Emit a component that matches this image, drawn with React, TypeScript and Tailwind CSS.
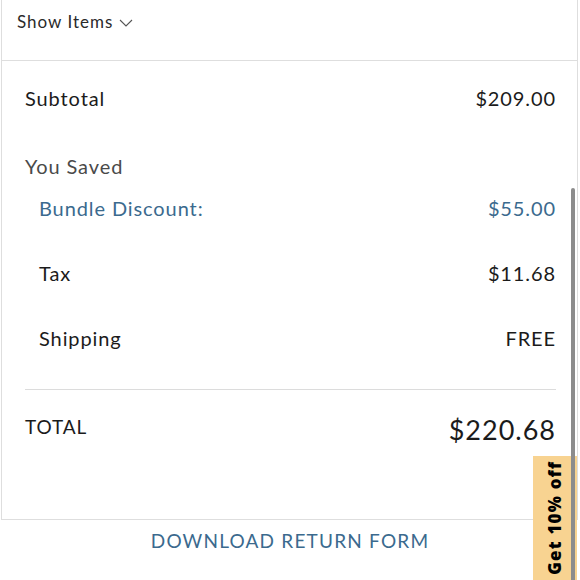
const rows = [
  { label: 'Tax', value: '$11.68' },
  { label: 'Shipping', value: 'FREE' },
];

export default function App() {
  return (
    <div
      className="relative h-[580px] w-[580px] overflow-hidden bg-white text-[#1b1b1b]"
      style={{ fontFamily: 'Lato, "Noto Sans", sans-serif' }}
    >
      <div className="ml-[1px] w-[577px] border-x border-b border-[#dedede]">
        {/* Show items */}
        <div className="flex h-[61px] items-start border-b border-[#dedede] pl-[15px] pt-[12px]">
          <span className="text-[17px] leading-[20px] tracking-[1px] text-[#2a2a2a]">Show Items</span>
          <svg width="14" height="9" viewBox="0 0 14 9" className="ml-[6px] mt-[7px]">
            <polyline points="1,1 7,7 13,1" fill="none" stroke="#555" strokeWidth="1.1" />
          </svg>
        </div>

        <div className="pb-[74px] pl-[23px] pr-[21px] tracking-[0.9px]">
          <div className="flex items-center justify-between pt-[25px] text-[20px] leading-[24px]">
            <span>Subtotal</span>
            <span>$209.00</span>
          </div>

          <div className="pt-[44px] text-[20px] leading-[24px] text-[#4a4a4a]">You Saved</div>

          <div className="pl-[14px]">
            <div className="flex items-center justify-between pt-[18px] text-[20px] leading-[24px] text-[#3b6a8e]">
              <span>Bundle Discount:</span>
              <span>$55.00</span>
            </div>
            {rows.map((r) => (
              <div
                key={r.label}
                className="flex items-center justify-between pt-[41px] text-[20px] leading-[24px]"
              >
                <span>{r.label}</span>
                <span>{r.value}</span>
              </div>
            ))}
          </div>

          <div className="mt-[39px] border-t border-[#dcdcdc]" />

          <div className="flex items-start justify-between pt-[25px]">
            <span className="text-[19px] leading-[24px]">TOTAL</span>
            <span className="text-[27px] leading-[30px] tracking-[1px]">$220.68</span>
          </div>
        </div>
      </div>

      <div className="pt-[9px] text-center text-[19px] leading-[24px] tracking-[1.2px] text-[#3b6a8e]">
        DOWNLOAD RETURN FORM
      </div>

      {/* promo tab */}
      <div className="absolute bottom-0 right-[3px] flex h-[124px] w-[44px] items-center justify-center bg-[#f8d391]">
        <span
          className="-rotate-90 whitespace-nowrap text-[17px] font-extrabold tracking-[1.2px] text-black"
          style={{ fontFamily: '"Open Sans", sans-serif' }}
        >
          Get 10% off
        </span>
      </div>

      {/* scrollbar */}
      <div className="absolute right-[5px] top-[188px] h-[400px] w-[4px] rounded-full bg-[#8c8c8c]" />
    </div>
  );
}
